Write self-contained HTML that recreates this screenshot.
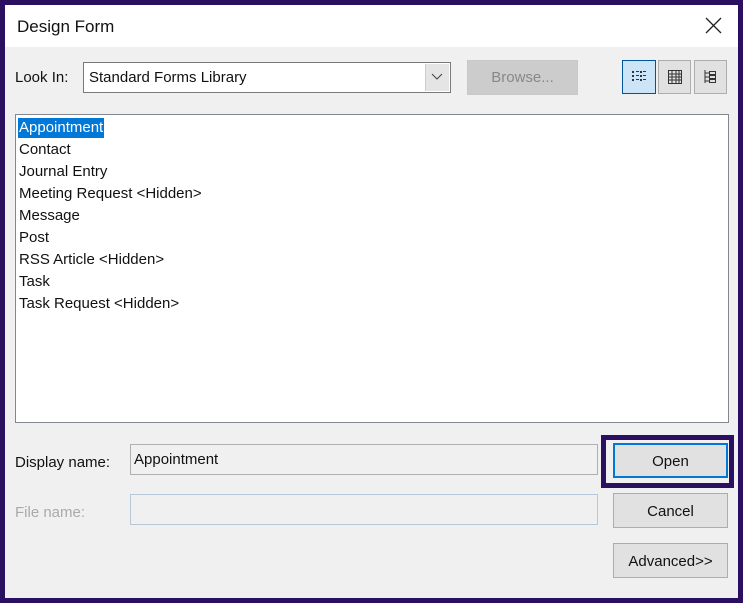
<!DOCTYPE html>
<html><head><style>
*{box-sizing:border-box;margin:0;padding:0}
body{width:743px;height:603px;background:#2b1061;font-family:"Liberation Sans",sans-serif;position:relative;overflow:hidden}
.win{position:absolute;left:5px;top:5px;width:733px;height:593px;background:#f0f0f0}
.title{position:absolute;left:0;top:0;width:733px;height:42px;background:#fff}
.a{position:absolute}
.t{font-size:15px;color:#111;white-space:nowrap}
.btn{position:absolute;background:#e1e1e1;border:1px solid #adadad;font-size:15px;text-align:center;color:#111}
</style></head><body>
<div class="win">
<div class="title"></div>
<div class="a t" style="left:12px;top:12px;font-size:17px">Design Form</div>
<svg class="a" style="left:700px;top:12px" width="17" height="17"><path d="M1 1L16 16M16 1L1 16" stroke="#222" stroke-width="1.3"/></svg>
<div class="a t" style="left:10px;top:64px">Look In:</div>
<div class="a" style="left:78px;top:57px;width:368px;height:31px;background:#fff;border:1px solid #7a7a7a"></div>
<div class="a t" style="left:84px;top:64px">Standard Forms Library</div>
<div class="a" style="left:420px;top:59px;width:24px;height:27px;background:#e5e5e5;border-left:1px solid #ccc"></div>
<svg class="a" style="left:426px;top:68px" width="12" height="8"><path d="M1 1L6 6L11 1" stroke="#444" fill="none"/></svg>
<div class="btn" style="left:462px;top:55px;width:111px;height:35px;background:#ccc;border-color:#c8c8c8;color:#888;line-height:33px">Browse...</div>
<div class="btn" style="left:617px;top:55px;width:34px;height:34px;background:#cce4f7;border-color:#005499"></div>
<div class="btn" style="left:653px;top:55px;width:33px;height:34px"></div>
<div class="btn" style="left:689px;top:55px;width:33px;height:34px"></div>
<svg class="a" style="left:627px;top:65px" width="14" height="13"><g fill="#333"><rect x="0" y="1" width="2" height="2"/><rect x="4" y="1" width="3" height="1"/><rect x="8" y="1" width="2" height="2"/><rect x="11" y="1" width="3" height="1"/><rect x="0" y="5" width="2" height="2"/><rect x="4" y="5" width="3" height="1"/><rect x="8" y="5" width="2" height="2"/><rect x="11" y="5" width="3" height="1"/><rect x="0" y="9" width="2" height="2"/><rect x="4" y="9" width="3" height="1"/><rect x="8" y="9" width="2" height="2"/><rect x="11" y="9" width="3" height="1"/></g></svg>
<svg class="a" style="left:663px;top:65px" width="14" height="14"><g fill="none" stroke="#333"><rect x="0.5" y="0.5" width="13" height="13"/><path d="M0 4H14M0 7H14M0 10H14M4 0V14M8 0V14M11 0V14"/></g></svg>
<svg class="a" style="left:699px;top:64px" width="13" height="15"><g fill="none" stroke="#333"><path d="M1 1V14M1 4H5M1 8H5M1 12H5"/><rect x="5.5" y="2.5" width="6" height="3"/><rect x="5.5" y="6.5" width="6" height="3"/><rect x="5.5" y="10.5" width="6" height="3"/></g></svg>
<div class="a" style="left:10px;top:109px;width:714px;height:309px;background:#fff;border:1px solid #828790"></div>
<div class="a t" style="left:13px;top:113px;background:#0078d7;color:#fff;padding:1px 1px;line-height:18px">Appointment</div>
<div class="a t" style="left:14px;top:134px;line-height:22px">Contact<br>Journal Entry<br>Meeting Request &lt;Hidden&gt;<br>Message<br>Post<br>RSS Article &lt;Hidden&gt;<br>Task<br>Task Request &lt;Hidden&gt;</div>
<div class="a t" style="left:10px;top:449px">Display name:</div>
<div class="a" style="left:125px;top:439px;width:468px;height:31px;background:#f0f0f0;border:1px solid #b0b0b0"></div>
<div class="a t" style="left:129px;top:446px">Appointment</div>
<div class="a t" style="left:10px;top:499px;color:#aaa">File name:</div>
<div class="a" style="left:125px;top:489px;width:468px;height:31px;background:#f0f0f0;border:1px solid #b8c8d8"></div>
<div class="a" style="left:596px;top:430px;width:133px;height:53px;border:5px solid #2b1061"></div>
<div class="btn" style="left:608px;top:438px;width:115px;height:35px;border:2px solid #0078d7;line-height:33px">Open</div>
<div class="btn" style="left:608px;top:488px;width:115px;height:35px;line-height:35px">Cancel</div>
<div class="btn" style="left:608px;top:538px;width:115px;height:35px;line-height:35px">Advanced&gt;&gt;</div>
</div>
</body></html>
